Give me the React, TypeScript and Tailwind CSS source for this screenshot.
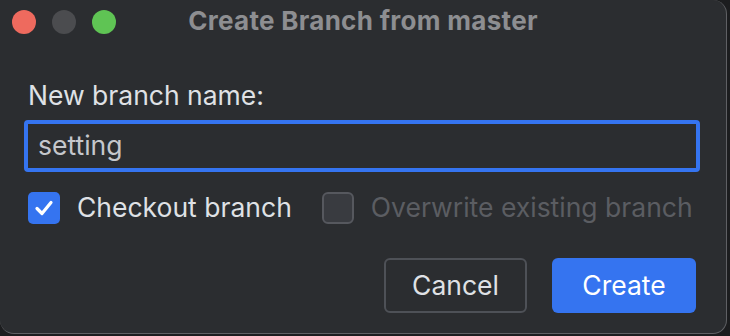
export default function App() {
  return (
    <div className="w-[730px] h-[336px] bg-[#1c1d1f] overflow-hidden" style={{ fontFamily: "Inter, 'Noto Sans', sans-serif" }}>
      <div className="w-[727px] h-[334px] bg-[#2b2d30] rounded-tr-[14px] rounded-br-[14px] rounded-bl-[14px] border-r border-b border-[#5f6064] flex flex-col">
        {/* title bar */}
        <div className="h-[44px] grid grid-cols-[1fr_auto_1fr] items-center">
          <div className="flex gap-[16px] pl-[12px]">
            <span className="w-[24px] h-[24px] rounded-full bg-[#ee6a5e]" />
            <span className="w-[24px] h-[24px] rounded-full bg-[#4b4c4f]" />
            <span className="w-[24px] h-[24px] rounded-full bg-[#5fc454]" />
          </div>
          <div className="-mt-[3px] text-[26px] font-bold text-[#8d8e91] tracking-[0.3px]">Create Branch from master</div>
          <div />
        </div>

        <div className="px-[24px] pt-[36px] flex flex-col text-[26.5px]">
          <div className="pl-[4px] leading-[30px] text-[#dfe1e5]">New branch name:</div>
          <div className="mt-[10px] h-[52px] w-[676px] border-[4px] border-[#3574f0] rounded-[4px] flex items-center pl-[10px] text-[#c5c7cc]">
            setting
          </div>

          <div className="mt-[20px] flex items-center pl-[4px] h-[32px]">
            <span className="w-[32px] h-[32px] rounded-[5px] bg-[#3574f0] flex items-center justify-center">
              <svg width="22" height="22" viewBox="0 0 22 22" fill="none">
                <path d="M4 11.5 L9 16.5 L18 5.5" stroke="white" strokeWidth="3.2" strokeLinecap="round" strokeLinejoin="round" />
              </svg>
            </span>
            <span className="ml-[17px] text-[#dfe1e5]">Checkout branch</span>
            <span className="ml-[30px] w-[32px] h-[32px] rounded-[6px] bg-[#393b40] border-[2px] border-[#56585e]" />
            <span className="ml-[17px] text-[#5b5d62]">Overwrite existing branch</span>
          </div>

          <div className="mt-[34px] flex justify-end gap-[25px] pr-[6px]">
            <button className="w-[143px] h-[55px] rounded-[6px] border-[2px] border-[#4e5157] text-[#dfe1e5]">Cancel</button>
            <button className="w-[144px] h-[55px] rounded-[6px] bg-[#3574f0] text-white">Create</button>
          </div>
        </div>
      </div>
    </div>
  );
}
